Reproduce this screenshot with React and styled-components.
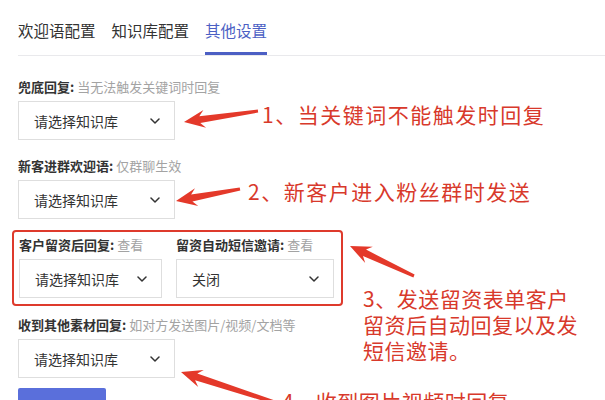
import React from 'react';
import styled, { createGlobalStyle } from 'styled-components';

const GlobalStyle = createGlobalStyle`
  html, body {
    margin: 0;
    padding: 0;
    background: #fff;
  }
  body {
    font-family: "Noto Sans CJK SC", "Noto Sans", sans-serif;
  }
`;

const Page = styled.div`
  position: relative;
  width: 605px;
  height: 400px;
  overflow: hidden;
  box-sizing: border-box;
  padding-left: 18px;
  background: #fff;
`;

const TabBar = styled.div`
  display: flex;
  gap: 16px;
  border-bottom: 1px solid #e9e9ec;
`;

const Tab = styled.div`
  padding: 20px 0 ${p => (p.active ? '12px' : '15px')};
  line-height: 20px;
  font-size: 15.5px;
  color: ${p => (p.active ? '#4c5fc4' : '#333')};
  border-bottom: ${p => (p.active ? '3px solid #4c5fc4' : 'none')};
`;

const Form = styled.div`
  display: flex;
  flex-direction: column;
  padding-top: 22px;
`;

const Field = styled.div`
  display: flex;
  flex-direction: column;
  gap: 5px;
  margin-bottom: ${p => p.mb || 0}px;
`;

const Label = styled.div`
  font-size: 13px;
  line-height: 18px;
  color: #333;
  white-space: nowrap;
  b {
    font-weight: 600;
  }
  span {
    color: #a3a3a3;
    margin-left: 3px;
  }
`;

const Select = styled.div`
  box-sizing: border-box;
  width: ${p => p.w || 157}px;
  height: 39px;
  border: 1px solid #dedede;
  display: flex;
  align-items: center;
  justify-content: space-between;
  padding: 0 14px 0 15px;
  font-size: 14px;
  color: #333;
  background: #fff;
`;

const HighlightBox = styled.div`
  box-sizing: border-box;
  width: 331px;
  margin-left: -6px;
  margin-bottom: 10px;
  border: 2px solid #de3a2c;
  border-radius: 4px;
  padding: 4px 7px 6px 5px;
  display: flex;
  gap: 14px;
`;

const SaveButton = styled.div`
  width: 88px;
  height: 30px;
  margin-top: 10px;
  background: #5a6fdb;
  border-radius: 2px;
`;

const Note = styled.div`
  position: absolute;
  left: ${p => p.x}px;
  top: ${p => p.y}px;
  font-size: 21px;
  line-height: 26px;
  letter-spacing: ${p => p.ls}px;
  color: #d8392b;
  white-space: nowrap;
`;

const Overlay = styled.svg`
  position: absolute;
  left: 0;
  top: 0;
  pointer-events: none;
`;

const Chevron = () => (
  <svg width="10" height="6" viewBox="0 0 10 6">
    <polyline points="1,1 5,5 9,1" fill="none" stroke="#333" strokeWidth="1.5" strokeLinecap="round" strokeLinejoin="round" />
  </svg>
);

const Dropdown = ({ w, text }) => (
  <Select w={w}>
    <span>{text}</span>
    <Chevron />
  </Select>
);

// tapered arrow: thin tail, wider shaft near the head, swept head
function arrowPoints([tx, ty], [hx, hy]) {
  const len = Math.hypot(hx - tx, hy - ty);
  const dx = (hx - tx) / len;
  const dy = (hy - ty) / len;
  const nx = -dy;
  const ny = dx;
  const headLen = 21;
  const headW = 18;
  const bx = hx - dx * headLen;
  const by = hy - dy * headLen;
  const sx = hx - dx * (headLen - 5);
  const sy = hy - dy * (headLen - 5);
  const pts = [
    [tx + nx * 1.5, ty + ny * 1.5],
    [sx + nx * 3.5, sy + ny * 3.5],
    [bx + nx * headW / 2, by + ny * headW / 2],
    [hx, hy],
    [bx - nx * headW / 2, by - ny * headW / 2],
    [sx - nx * 3.5, sy - ny * 3.5],
    [tx - nx * 1.5, ty - ny * 1.5],
  ];
  return pts.map(p => p.map(v => v.toFixed(1)).join(',')).join(' ');
}

const arrows = [
  [[258, 111], [184, 122]],
  [[240, 189], [176, 201]],
  [[414, 276], [350, 246]],
  [[292, 408], [181, 372]],
];

const App = () => {
  return (
    <Page>
      <GlobalStyle />
      <TabBar>
        <Tab>欢迎语配置</Tab>
        <Tab>知识库配置</Tab>
        <Tab active>其他设置</Tab>
      </TabBar>
      <Form>
        <Field mb={17}>
          <Label><b>兜底回复:</b><span>当无法触发关键词时回复</span></Label>
          <Dropdown text="请选择知识库" />
        </Field>
        <Field mb={11}>
          <Label><b>新客进群欢迎语:</b><span>仅群聊生效</span></Label>
          <Dropdown text="请选择知识库" />
        </Field>
        <HighlightBox>
          <Field>
            <Label><b>客户留资后回复:</b><span>查看</span></Label>
            <Dropdown w={143} text="请选择知识库" />
          </Field>
          <Field>
            <Label><b>留资自动短信邀请:</b><span>查看</span></Label>
            <Dropdown w={158} text="关闭" />
          </Field>
        </HighlightBox>
        <Field>
          <Label><b>收到其他素材回复:</b><span>如对方发送图片/视频/文档等</span></Label>
          <Dropdown text="请选择知识库" />
        </Field>
        <SaveButton />
      </Form>

      <Overlay width="605" height="400" viewBox="0 0 605 400">
        {arrows.map(([tail, tip], i) => (
          <polygon key={i} points={arrowPoints(tail, tip)} fill="#e4392a" />
        ))}
      </Overlay>

      <Note x={262} y={101} ls={1.5}>1、当关键词不能触发时回复</Note>
      <Note x={248} y={178} ls={1.5}>2、新客户进入粉丝群时发送</Note>
      <Note x={363} y={285} ls={0.5}>
        3、发送留资表单客户<br />留资后自动回复以及发<br />短信邀请。
      </Note>
      <Note x={282} y={388} ls={0.5}>4、收到图片视频时回复</Note>
    </Page>
  );
};

export default App;
